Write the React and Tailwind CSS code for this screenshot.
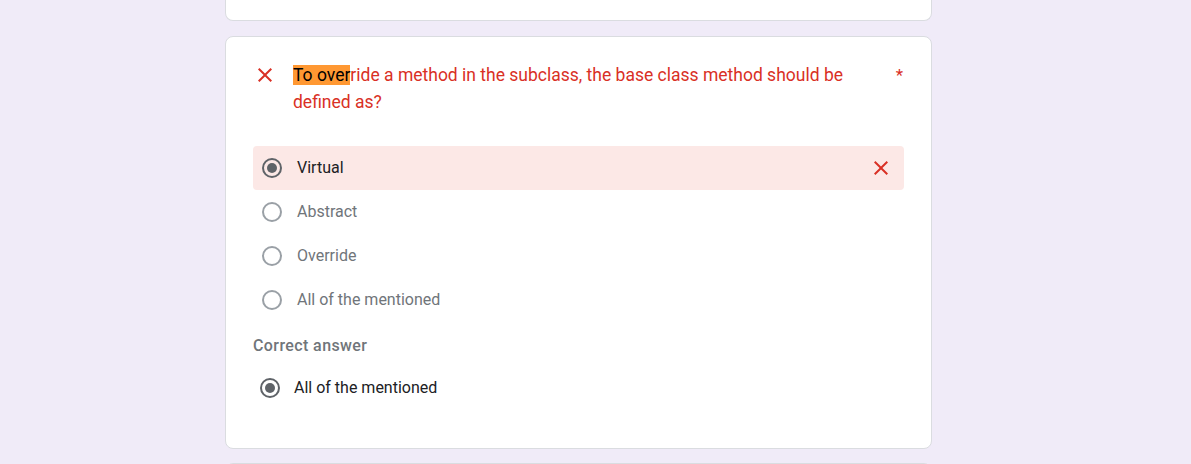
function CloseIcon({ className }) {
    return (
        <svg viewBox="0 0 24 24" className={className} fill="currentColor">
            <path d="M19 6.41 17.59 5 12 10.59 6.41 5 5 6.41 10.59 12 5 17.59 6.41 19 12 13.41 17.59 19 19 17.59 13.41 12z" />
        </svg>
    );
}

function Radio({ checked }) {
    return (
        <div
            className={`w-5 h-5 rounded-full border-2 flex items-center justify-center shrink-0 ${
                checked ? "border-[#5f6368]" : "border-[#9aa0a6]"
            }`}
        >
            {checked && <div className="w-2.5 h-2.5 rounded-full bg-[#5f6368]" />}
        </div>
    );
}

const options = ["Virtual", "Abstract", "Override", "All of the mentioned"];

export default function App() {
    const picked = "Virtual";

    return (
        <div className="min-h-[464px] h-[464px] overflow-hidden bg-[#f0ebf8] font-['Roboto',sans-serif]">
            <div className="ml-[225px] w-[707px] flex flex-col">
                <div className="h-[21px] bg-white border border-t-0 border-[#dadce0] rounded-b-lg" />

                <div className="mt-[15px] bg-white border border-[#dadce0] rounded-lg px-[27px] pt-[25px] pb-[38px]">
                    <div className="flex items-start">
                        <CloseIcon className="w-6 h-6 text-[#d93025] mt-[1px] shrink-0" />
                        <div className="flex-1 ml-4 text-[17.5px] leading-[27px] text-[#d93025]">
                            <span className="bg-[#ff9832] text-black">To over</span>ride a method in the subclass, the base class method should be defined as?
                        </div>
                        <span className="pl-6 pr-[1px] text-[17px] leading-[27px] text-[#d93025]">*</span>
                    </div>

                    <div className="mt-[30px] flex flex-col">
                        {options.map((opt) => {
                            const wrong = opt === picked;
                            return (
                                <div
                                    key={opt}
                                    className={`h-11 flex items-center pl-[9px] pr-[11px] rounded ${wrong ? "bg-[#fce8e6]" : ""}`}
                                >
                                    <Radio checked={wrong} />
                                    <span className={`ml-[15px] text-[16px] flex-1 ${wrong ? "text-[#202124]" : "text-[#70757a]"}`}>
                                        {opt}
                                    </span>
                                    {wrong && <CloseIcon className="w-6 h-6 text-[#d93025]" />}
                                </div>
                            );
                        })}
                    </div>

                    <div className="mt-[14px] text-[16px] tracking-[0.4px] font-medium text-[#70757a] leading-5">Correct answer</div>

                    <div className="mt-[10px] h-11 flex items-center pl-[7px]">
                        <Radio checked />
                        <span className="ml-[14px] text-[16px] text-[#202124]">All of the mentioned</span>
                    </div>
                </div>

                <div className="mt-[14px] h-10 bg-white border border-[#dadce0] rounded-t-lg" />
            </div>
        </div>
    );
}
